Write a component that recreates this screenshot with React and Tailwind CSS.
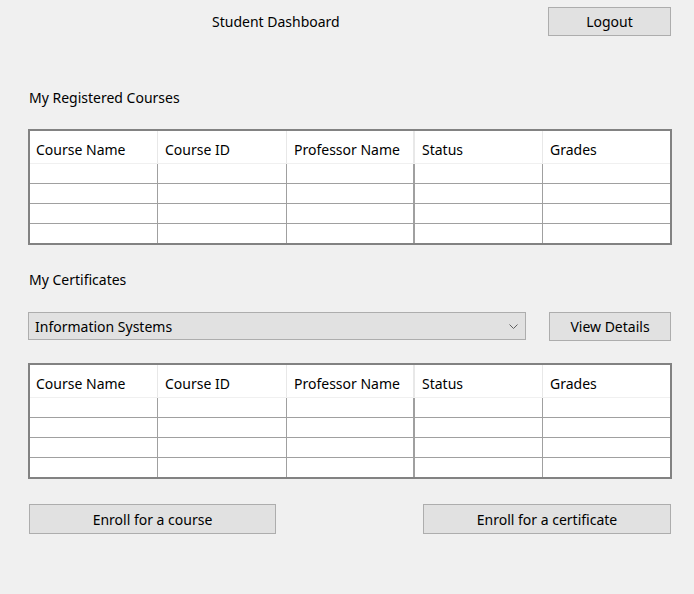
import React from 'react';

const columns = ['Course Name', 'Course ID', 'Professor Name', 'Status', 'Grades'];

// column line after each cell; the one after "Professor Name" is a bit heavier
const lineFor = (i) => {
    if (i === 4) return '';
    if (i === 2) return 'border-r-2';
    return 'border-r';
};

const CourseGrid = () => (
    <div className="w-[644px] border-2 border-[#828282] bg-white">
        <div className="grid grid-cols-[128px_129px_128px_128px_1fr] h-[33px] border-b border-[#f0f0f0]">
            {columns.map((c, i) => (
                <div key={c} className={`flex items-center pt-[4px] ${i === 0 ? 'pl-[6px]' : 'pl-[7px]'} ${lineFor(i)} border-[#e8e8e8]`}>
                    {c}
                </div>
            ))}
        </div>
        {[0, 1, 2, 3].map(r => (
            <div key={r} className={`grid grid-cols-[128px_129px_128px_128px_1fr] ${r < 3 ? 'h-[20px] border-b border-[#a0a0a0]' : 'h-[19px]'}`}>
                {columns.map((c, i) => (
                    <div key={c} className={`${lineFor(i)} border-[#a0a0a0]`}></div>
                ))}
            </div>
        ))}
    </div>
);

const WinButton = ({ children, className = '' }) => (
    <button className={`bg-[#e1e1e1] border border-[#adadad] text-black flex items-center justify-center ${className}`}>
        {children}
    </button>
);

const App = () => {
    return (
        <div className="w-[694px] h-[594px] bg-[#f0f0f0] text-[14px] text-black font-['Segoe_UI','Noto_Sans',sans-serif] overflow-hidden">
            <div className="flex items-start pt-[7px]">
                <div className="pl-[212px] pt-[4px]">Student Dashboard</div>
                <WinButton className="ml-auto mr-[23px] w-[123px] h-[29px]">Logout</WinButton>
            </div>

            <div className="pl-[29px] mt-[51px]">My Registered Courses</div>

            <div className="pl-[28px] mt-[21px]">
                <CourseGrid />
            </div>

            <div className="pl-[29px] mt-[24px]">My Certificates</div>

            <div className="flex items-start pl-[28px] mt-[22px]">
                <div className="w-[498px] h-[28px] bg-[#e1e1e1] border border-[#adadad] flex items-center pl-[6px] pr-[6px]">
                    <span>Information Systems</span>
                    <svg width="9" height="5" viewBox="0 0 9 5" className="ml-auto mr-[1px]">
                        <polyline points="0.5,0.5 4.5,4.5 8.5,0.5" fill="none" stroke="#606060" strokeWidth="1" />
                    </svg>
                </div>
                <WinButton className="ml-[23px] w-[122px] h-[29px]">View Details</WinButton>
            </div>

            <div className="pl-[28px] mt-[22px]">
                <CourseGrid />
            </div>

            <div className="flex pl-[29px] mt-[25px]">
                <WinButton className="w-[247px] h-[30px]">Enroll for a course</WinButton>
                <WinButton className="ml-[147px] w-[248px] h-[30px]">Enroll for a certificate</WinButton>
            </div>
        </div>
    );
};

export default App;
